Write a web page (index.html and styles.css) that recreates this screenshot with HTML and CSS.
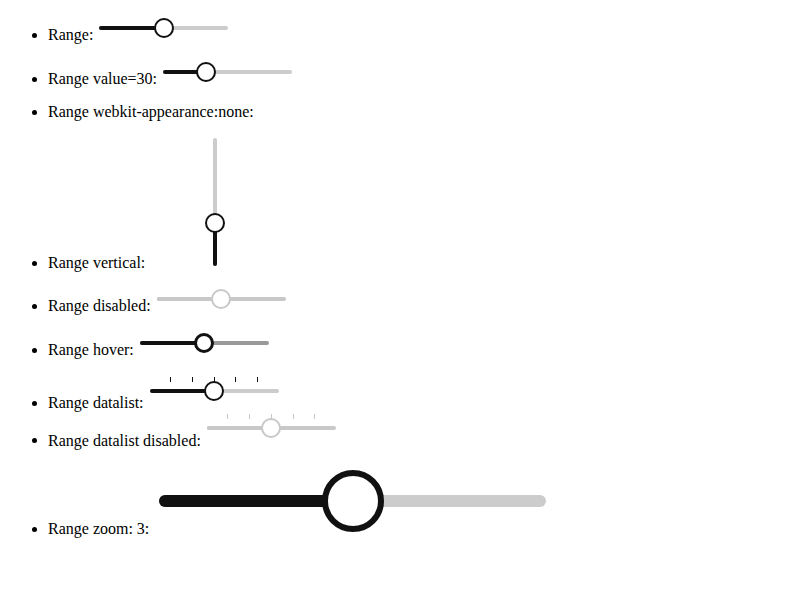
FILE: index.html
```html
<!DOCTYPE html>
<html>
<head>
<meta charset="utf-8">
<link rel="stylesheet" href="styles.css">
</head>
<body>
<ul class="list">
  <li>Range: <span class="range" style="--v:50"><span class="track"></span><span class="fill"></span><span class="thumb"></span></span></li>
  <li>Range value=30: <span class="range" style="--v:30"><span class="track"></span><span class="fill"></span><span class="thumb"></span></span></li>
  <li>Range webkit-appearance:none: <span class="range-none"></span></li>
  <li>Range vertical: <span class="range vertical" style="--v:30"><span class="track"></span><span class="fill"></span><span class="thumb"></span></span></li>
  <li>Range disabled: <span class="range disabled" style="--v:50"><span class="track"></span><span class="fill"></span><span class="thumb"></span></span></li>
  <li>Range hover: <span class="range hover" style="--v:50"><span class="track"></span><span class="fill"></span><span class="thumb"></span></span></li>
  <li>Range datalist: <span class="range datalist" style="--v:50"><span class="track"></span><span class="fill"></span><span class="tick" style="--t:10"></span><span class="tick" style="--t:30"></span><span class="tick" style="--t:50"></span><span class="tick" style="--t:70"></span><span class="tick" style="--t:90"></span><span class="thumb"></span></span></li>
  <li class="joined">Range datalist disabled: <span class="range datalist disabled" style="--v:50"><span class="track"></span><span class="fill"></span><span class="tick" style="--t:10"></span><span class="tick" style="--t:30"></span><span class="tick" style="--t:50"></span><span class="tick" style="--t:70"></span><span class="tick" style="--t:90"></span><span class="thumb"></span></span></li>
  <li>Range zoom: 3: <span class="range big" style="--v:50"><span class="track"></span><span class="fill"></span><span class="thumb"></span></span></li>
</ul>
</body>
</html>
```

FILE: styles.css
```css
html, body {
  background: #ffffff;
}
body {
  margin: 8px;
  font-family: "Liberation Serif", "Times New Roman", serif;
  font-size: 16px;
  color: #000;
}
.list {
  margin: 0;
  padding: 8px 0 0 40px;
}
.list li {
  margin: 0;
  line-height: 18px;
}
.list li + li {
  margin-top: 15.5px;
}
.list li.joined {
  margin-top: 0;
}

.range {
  position: relative;
  display: inline-block;
  width: 129px;
  height: 20px;
  margin: 2px;
  vertical-align: baseline;
}
.range .track {
  position: absolute;
  left: 0;
  right: 0;
  top: 8px;
  height: 4px;
  border-radius: 2px;
  background: #cccccc;
}
.range .fill {
  position: absolute;
  left: 0;
  top: 8px;
  height: 4px;
  width: calc(10px + var(--v) * 1.09px);
  border-radius: 2px 0 0 2px;
  background: #111111;
}
.range .thumb {
  position: absolute;
  top: 0;
  left: calc(var(--v) * 1.09px);
  width: 20px;
  height: 20px;
  box-sizing: border-box;
  border: 2px solid #111111;
  border-radius: 50%;
  background: #ffffff;
}

.range-none {
  display: inline-block;
  width: 0;
  height: 0;
}

/* vertical */
.range.vertical {
  width: 128px;
  height: 128px;
  margin-top: 1px;
}
.range.vertical .track {
  left: calc(50% - 2px);
  right: auto;
  width: 4px;
  top: 0;
  bottom: 0;
  height: auto;
}
.range.vertical .fill {
  left: calc(50% - 2px);
  top: auto;
  bottom: 0;
  width: 4px;
  height: calc(10px + var(--v) * 1.08px);
  border-radius: 0 0 2px 2px;
}
.range.vertical .thumb {
  top: auto;
  left: calc(50% - 10px);
  bottom: calc(var(--v) * 1.08px);
}

/* disabled */
.range.disabled .track,
.range.disabled .fill {
  background: #c8c8c8;
}
.range.disabled .thumb {
  border-color: #c8c8c8;
}

/* hover */
.range.hover .track {
  background: #9a9a9a;
}
.range.hover .thumb {
  border-width: 3.5px;
}

/* datalist */
.range.datalist {
  margin-top: 6.5px;
  margin-bottom: 7px;
}
.range .tick {
  position: absolute;
  top: -4px;
  left: calc(10px + var(--t) * 1.09px - 0.5px);
  width: 1px;
  height: 5px;
  background: #111111;
}
.range.disabled .tick {
  background: #c8c8c8;
}

/* zoomed */
.range.big {
  zoom: 3;
  margin-bottom: 1px;
}
.range.big .thumb {
  top: -0.33px;
  width: 20.67px;
  height: 20.67px;
  left: calc(var(--v) * 1.09px - 0.33px);
}
```
